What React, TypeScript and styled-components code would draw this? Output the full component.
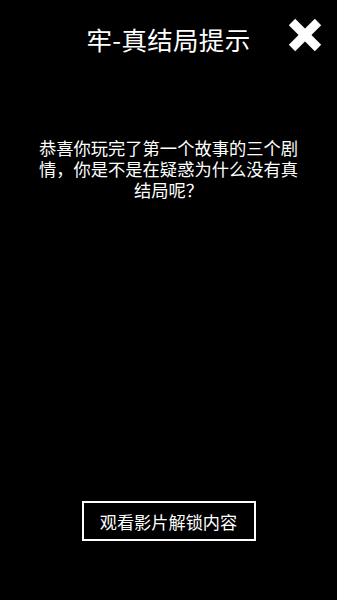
import React from "react";
import styled, { createGlobalStyle } from "styled-components";

const Global = createGlobalStyle`
  html, body { margin: 0; padding: 0; background: #000; }
  body { font-family: "Noto Sans CJK SC", "Noto Sans", sans-serif; }
`;

const Page = styled.div`
  width: 337px;
  height: 600px;
  background: #000;
  color: #fff;
  display: flex;
  flex-direction: column;
  align-items: center;
  box-sizing: border-box;
  padding-bottom: 59px;
`;

const Header = styled.div`
  width: 100%;
  height: 82px;
  display: grid;
  grid-template-columns: 1fr auto 1fr;
  align-items: center;
`;

const Title = styled.h1`
  grid-column: 2;
  margin: 0;
  font-size: 25.5px;
  font-weight: 400;
  line-height: 1;
  letter-spacing: 0.3px;
  padding-bottom: 5px;
`;

const Close = styled.button`
  grid-column: 3;
  justify-self: end;
  align-self: start;
  margin-top: 18px;
  margin-right: 15px;
  width: 34px;
  height: 34px;
  padding: 0;
  border: none;
  background: transparent;
  display: flex;
`;

const Message = styled.p`
  margin: 55px 0 0;
  width: 264px;
  font-size: 17.3px;
  line-height: 21px;
  text-align: center;
`;

const UnlockButton = styled.button`
  margin-top: auto;
  width: 174px;
  height: 40px;
  box-sizing: border-box;
  border: 2px solid #fff;
  background: #000;
  color: #fff;
  font-family: "Noto Sans CJK SC", "Noto Sans", sans-serif;
  font-size: 17.2px;
  padding: 0;
`;

export default function App() {
  return (
    <>
      <Global />
      <Page>
        <Header>
          <Title>牢-真结局提示</Title>
          <Close aria-label="关闭">
            <svg width="34" height="34" viewBox="0 0 34 34">
              <line x1="4" y1="4" x2="30" y2="30" stroke="#fff" strokeWidth="9" />
              <line x1="30" y1="4" x2="4" y2="30" stroke="#fff" strokeWidth="9" />
            </svg>
          </Close>
        </Header>
        <Message>
          恭喜你玩完了第一个故事的三个剧情，你是不是在疑惑为什么没有真结局呢？
        </Message>
        <UnlockButton>观看影片解锁内容</UnlockButton>
      </Page>
    </>
  );
}
